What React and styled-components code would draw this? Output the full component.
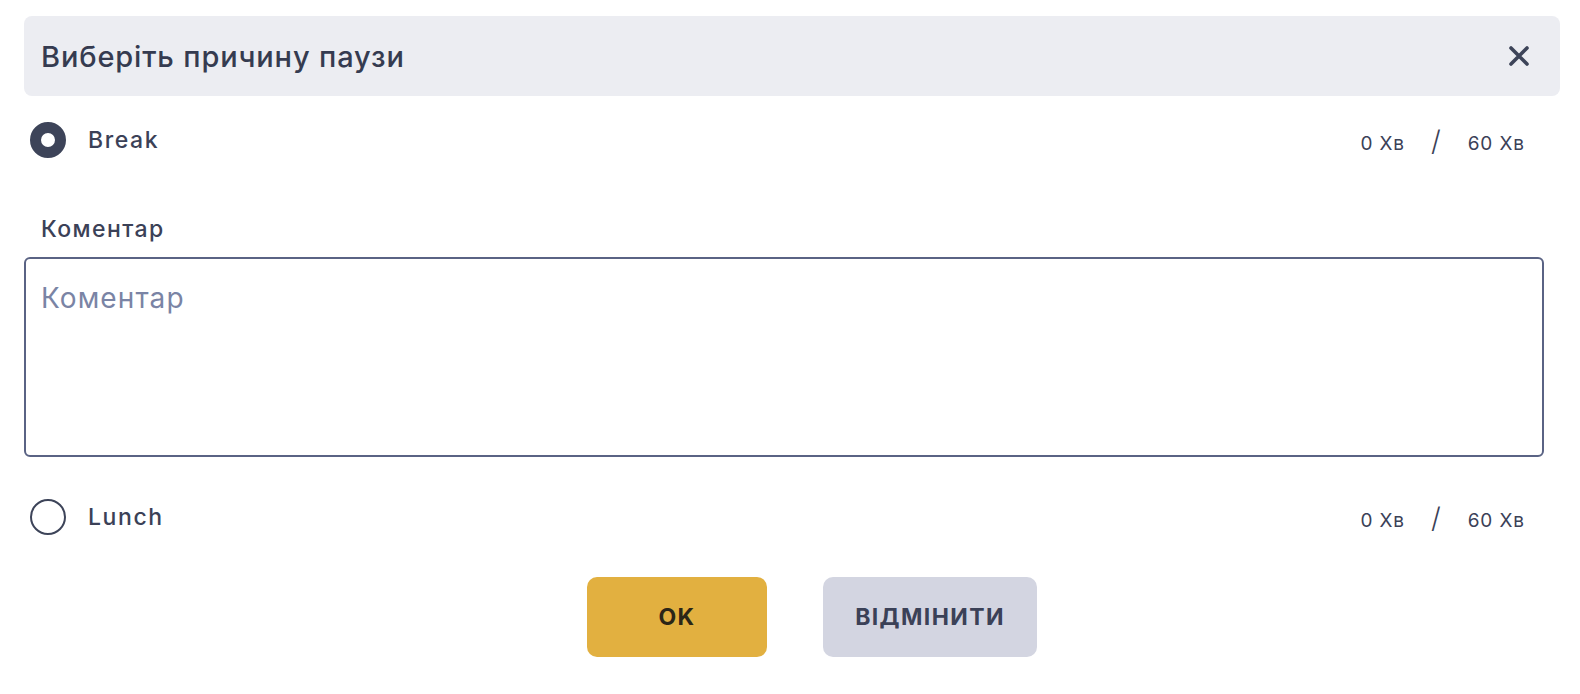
import styled, { createGlobalStyle } from 'styled-components'

const font = 'Inter, "Noto Sans", "DejaVu Sans", sans-serif'

const Global = createGlobalStyle`
  body {
    margin: 0;
    background: #fff;
    font-family: ${font};
    color: #3b4157;
  }
`

const Dialog = styled.div`
  display: flex;
  flex-direction: column;
  padding: 16px 20px 38px 24px;
  box-sizing: border-box;
  width: 1580px;
`

const Header = styled.div`
  display: flex;
  align-items: center;
  justify-content: space-between;
  height: 80px;
  padding: 0 30px 0 17px;
  background: #ecedf2;
  border-radius: 8px;
`

const Title = styled.h2`
  margin: 0;
  font-size: 29px;
  font-weight: 500;
  letter-spacing: 0.85px;
  color: #353b50;
`

const Close = styled.button`
  display: flex;
  align-items: center;
  justify-content: center;
  width: 22px;
  height: 22px;
  padding: 0;
  border: none;
  background: none;
  cursor: pointer;
`

const ReasonRow = styled.div`
  display: flex;
  align-items: center;
  height: 88px;
  padding: 0 35px 0 6px;
  margin-top: ${p => p.$top || 0}px;
`

const Radio = styled.span`
  width: 36px;
  height: 36px;
  border-radius: 50%;
  box-sizing: border-box;
  flex-shrink: 0;
  border: ${p => (p.$checked ? '11px solid #3d4459' : '2px solid #3d4459')};
  background: #fff;
`

const ReasonName = styled.span`
  margin-left: 22px;
  font-size: 23px;
  font-weight: 500;
  letter-spacing: 1.6px;
  color: #3b4157;
  flex: 1;
`

const Limit = styled.div`
  display: flex;
  align-items: center;
  font-size: 19px;
  letter-spacing: 0.9px;
  color: #3b4157;
  margin-top: 6px;
`

const Slash = styled.span`
  font-size: 28px;
  font-weight: 300;
  margin: 0 26px 0 26px;
  position: relative;
  top: -2px;
`

const CommentBlock = styled.div`
  display: flex;
  flex-direction: column;
  padding-right: 16px;
`

const Label = styled.label`
  margin: 31px 0 14px 17px;
  font-size: 23px;
  font-weight: 500;
  letter-spacing: 1.4px;
  color: #3b4157;
`

const TextArea = styled.textarea`
  height: 200px;
  box-sizing: border-box;
  padding: 22px 15px;
  border: 2px solid #5a6384;
  border-radius: 6px;
  font-family: ${font};
  font-size: 28px;
  letter-spacing: 1.1px;
  color: #3b4157;
  resize: none;
  outline: none;

  &::placeholder {
    color: #7a84a5;
  }
`

const Actions = styled.div`
  display: flex;
  justify-content: center;
  gap: 56px;
  padding-left: 40px;
  margin-top: 16px;
`

const Button = styled.button`
  height: 80px;
  width: ${p => p.$w}px;
  border: none;
  border-radius: 10px;
  font-family: ${font};
  font-size: 23px;
  font-weight: 700;
  letter-spacing: 1.4px;
  text-transform: uppercase;
  background: ${p => (p.$primary ? '#e2b040' : '#d3d5e1')};
  color: ${p => (p.$primary ? '#2b2617' : '#3b4157')};
  cursor: pointer;
`

function Reason(props) {
  return (
    <ReasonRow $top={props.top}>
      <Radio $checked={props.checked} />
      <ReasonName>{props.name}</ReasonName>
      <Limit>
        <span>{props.used} Хв</span>
        <Slash>/</Slash>
        <span>{props.max} Хв</span>
      </Limit>
    </ReasonRow>
  )
}

export default function App() {
  return (
    <>
      <Global />
      <Dialog>
        <Header>
          <Title>Виберіть причину паузи</Title>
          <Close aria-label="close">
            <svg width="20" height="20" viewBox="0 0 20 20">
              <path d="M2 2 L18 18 M18 2 L2 18" stroke="#3d4459" strokeWidth="3.6" strokeLinecap="round" />
            </svg>
          </Close>
        </Header>

        <Reason checked name="Break" used={0} max={60} />

        <CommentBlock>
          <Label>Коментар</Label>
          <TextArea placeholder="Коментар" />
        </CommentBlock>

        <Reason name="Lunch" used={0} max={60} top={16} />

        <Actions>
          <Button $primary $w={180}>Ok</Button>
          <Button $w={214}>Відмінити</Button>
        </Actions>
      </Dialog>
    </>
  )
}
